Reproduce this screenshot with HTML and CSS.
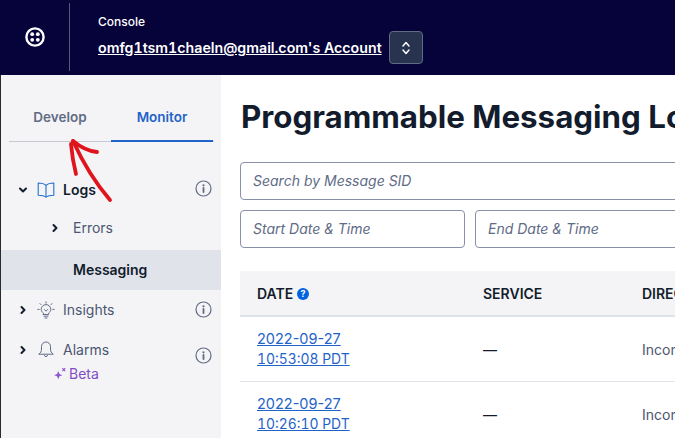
FILE: index.html
```html
<!DOCTYPE html>
<html lang="en">
<head>
<meta charset="utf-8">
<title>Programmable Messaging Logs</title>
<link rel="stylesheet" href="styles.css">
</head>
<body>
<header class="topbar">
	<div class="logo-cell">
		<svg width="22" height="22" viewBox="0 0 22 22" fill="none"><circle cx="11" cy="11" r="8.6" stroke="#fff" stroke-width="2.4"/><circle cx="8.2" cy="8.2" r="1.9" fill="#fff"/><circle cx="13.8" cy="8.2" r="1.9" fill="#fff"/><circle cx="8.2" cy="13.8" r="1.9" fill="#fff"/><circle cx="13.8" cy="13.8" r="1.9" fill="#fff"/></svg>
	</div>
	<div class="account">
		<div class="console">Console</div>
		<div class="account-row">
			<a href="#" class="account-name">omfg1tsm1chaeln@gmail.com's Account</a>
			<button class="switcher">
				<svg width="10" height="16" viewBox="0 0 10 16" fill="none" stroke="#fff" stroke-width="1.5" stroke-linecap="round" stroke-linejoin="round"><path d="M2 6 5 2.6 8 6"/><path d="M2 10 5 13.4 8 10"/></svg>
			</button>
		</div>
	</div>
</header>
<div class="layout">
	<nav class="sidebar">
		<div class="tabs">
			<a href="#" class="tab">Develop</a>
			<a href="#" class="tab active">Monitor</a>
		</div>
		<ul class="menu">
			<li class="item item-logs">
				<svg class="chev" width="10" height="10" viewBox="0 0 10 10" fill="none" stroke="#121c2d" stroke-width="2" stroke-linecap="round" stroke-linejoin="round"><path d="M2 3.5 5 6.5 8 3.5"/></svg>
				<svg class="icon" width="18" height="18" viewBox="0 0 18 18" fill="none" stroke="#1f6fd0" stroke-width="1.1" stroke-linejoin="round"><path d="M9 4.4C7.4 2.8 4.8 2 1.2 2v12.2c3.6 0 6.2.6 7.8 2 1.6-1.400 4.200-2 7.800-2V2C13.200 2 10.600 2.800 9 4.400Z"/><path d="M9 4.400V16.200"/></svg>
				<span class="label strong">Logs</span>
				<svg class="info" width="17" height="17" viewBox="0 0 17 17"><use href="#info"/></svg>
			</li>
			<li class="item sub">
				<svg class="chev" width="10" height="10" viewBox="0 0 10 10" fill="none" stroke="#121c2d" stroke-width="2" stroke-linecap="round" stroke-linejoin="round"><path d="M3.5 2 6.5 5 3.5 8"/></svg>
				<span class="label">Errors</span>
			</li>
			<li class="item selected"><span class="label strong">Messaging</span></li>
			<li class="item item-insights">
				<svg class="chev" width="10" height="10" viewBox="0 0 10 10" fill="none" stroke="#121c2d" stroke-width="2" stroke-linecap="round" stroke-linejoin="round"><path d="M3.5 2 6.5 5 3.5 8"/></svg>
				<svg class="icon" width="18" height="18" viewBox="0 0 18 18" fill="none" stroke="#606b85" stroke-width="1" stroke-linecap="round" stroke-linejoin="round"><path d="M6.3 12C4.9 11 4.2 9.8 4.2 8.4a4.800 4.800 0 0 1 9.600 0c0 1.400-.7 2.600-2.100 3.600V13.500H6.300Z"/><path d="M7 15.200h4M8 17h2M9 .8v1.400M3 2.600l1 1M15 2.600l-1 1M.8 8.400h1.400M15.800 8.400h1.400M7.200 8.400 9 10.200l1.800-1.800"/></svg>
				<span class="label">Insights</span>
				<svg class="info" width="17" height="17" viewBox="0 0 17 17"><use href="#info"/></svg>
			</li>
			<li class="item item-alarms">
				<svg class="chev" width="10" height="10" viewBox="0 0 10 10" fill="none" stroke="#121c2d" stroke-width="2" stroke-linecap="round" stroke-linejoin="round"><path d="M3.5 2 6.5 5 3.5 8"/></svg>
				<svg class="icon" width="18" height="18" viewBox="0 0 18 18" fill="none" stroke="#606b85" stroke-width="1" stroke-linecap="round" stroke-linejoin="round"><path d="M2 14c1.5-1 2.5-2.5 2.5-5V6.500a4.500 4.500 0 0 1 9 0V9c0 2.500 1 4 2.500 5Z"/><path d="M7.400 15.500a1.700 1.700 0 0 0 3.200 0"/></svg>
				<span class="alarm-text">
					<span class="label">Alarms</span>
					<span class="beta">
						<svg class="beta-star" width="14" height="14" viewBox="0 0 12 12" fill="#8d56d0"><path d="M4.5 3.5 5.5 6 8 7 5.5 8 4.5 10.5 3.5 8 1 7 3.5 6Z"/><path d="M8 1l2.5 2.5M10.5 1 8 3.5" stroke="#8d56d0" stroke-width="1" fill="none"/></svg>Beta
					</span>
				</span>
				<svg class="info" width="17" height="17" viewBox="0 0 17 17"><use href="#info"/></svg>
			</li>
		</ul>
		<svg class="arrow" width="60" height="66" viewBox="0 0 60 66" fill="none" stroke="#e0141c" stroke-width="3.8" stroke-linecap="round" stroke-linejoin="round"><path d="M4 6C5 18 7 28 9 36"/><path d="M6 3C12 16 24 40 43 62"/><path d="M6 3C12 8 20 13 30 14"/></svg>
	</nav>
	<main class="main">
		<h1 class="title">Programmable Messaging Logs</h1>
		<div class="field field-full">Search by Message SID</div>
		<div class="date-row">
			<div class="field field-start">Start Date &amp; Time</div>
			<div class="field field-end">End Date &amp; Time</div>
		</div>
		<table class="logs">
			<thead>
				<tr>
					<th class="col-date">DATE <svg class="help" width="12" height="12" viewBox="0 0 12 12"><circle cx="6" cy="6" r="6" fill="#0263e0"/><text x="6" y="9.3" text-anchor="middle" font-family="Inter" font-size="9" font-weight="700" fill="#fff">?</text></svg></th>
					<th class="col-service">SERVICE</th>
					<th>DIRECTION</th>
				</tr>
			</thead>
			<tbody>
				<tr>
					<td><a href="#">2022-09-27<br><span class="time">10:53:08 PDT</span></a></td>
					<td>—</td>
					<td class="muted">Incoming</td>
				</tr>
				<tr>
					<td><a href="#">2022-09-27<br><span class="time">10:26:10 PDT</span></a></td>
					<td>—</td>
					<td class="muted">Incoming</td>
				</tr>
			</tbody>
		</table>
	</main>
</div>
<svg class="defs" width="0" height="0">
	<symbol id="info" viewBox="0 0 17 17">
		<circle cx="8.5" cy="8.5" r="7.5" fill="none" stroke="#606b85" stroke-width="1.2"/>
		<circle cx="8.5" cy="5.3" r="1.1" fill="#606b85"/>
		<path d="M8.5 7.8v4.2" stroke="#606b85" stroke-width="1.8" stroke-linecap="round"/>
	</symbol>
</svg>
</body>
</html>
```

FILE: styles.css
```css
html, body {
	margin:0;
	padding:0;
	height:100%;
	overflow:hidden;
	background:#ffffff;
	font-family:Inter, "Liberation Sans", sans-serif;
	color:#121c2d;}
a {color:inherit;}
.defs {display:block;}

.topbar {
	display:flex;
	height:75px;
	background:#06033a;
	color:#ffffff;}
.logo-cell {
	display:flex;
	align-items:center;
	justify-content:center;
	width:69px;
	height:68px;
	margin-top:3px;
	border-right:1px solid #565b78;}
.account {padding:14px 0 0 28px;}
.console {
	font-size:12px;
	line-height:15px;
	font-weight:500;}
.account-row {
	display:flex;
	align-items:center;
	gap:7px;
	margin-top:2px;}
.account-name {
	font-size:14.2px;
	font-weight:600;
	font-variant-numeric:tabular-nums;
	color:#ffffff;}
.switcher {
	display:flex;
	align-items:center;
	justify-content:center;
	width:34px;
	height:33px;
	padding:0;
	background:#27334f;
	border:1px solid #606b85;
	border-radius:4px;}

.layout {
	display:flex;
	height:363px;}
.sidebar {
	position:relative;
	width:221px;
	flex:none;
	box-sizing:border-box;
	padding-top:25px;
	background:#f4f4f6;
	border-left:1px solid #2b2b2b;}
.tabs {
	display:flex;
	margin:0 7px 0 8px;
	padding-right:1px;
	border-bottom:1px solid #c8cad2;
	height:41px;}
.tab {
	flex:1;
	text-align:center;
	font-size:13.5px;
	line-height:34px;
	font-weight:600;
	text-decoration:none;
	color:#606b85;}
.tab.active {
	color:#1f63c8;
	border-bottom:2px solid #1f63c8;
	height:40px;}
.menu {
	list-style:none;
	margin:0;
	padding:0;}
.item {
	display:flex;
	align-items:center;
	padding-left:17px;
	font-size:14px;
	color:#4b5671;}
.item .chev {flex:none; margin-right:9px;}
.item .icon {flex:none; margin-right:8px;}
.item .info {margin-left:auto; margin-right:9px; flex:none;}
.item-logs {height:36px; margin-top:30px;}
.item-logs .info {margin-top:-3px;}
.sub {height:40px; padding:0 0 2px 49px;}
.sub .chev {margin-right:13px;}
.selected {
	height:40px;
	padding-left:72px;
	background:#e1e3ea;}
.item-insights {height:40px;}
.item-insights .info {margin-top:-2px;}
.item-alarms {align-items:flex-start; padding-top:10px;}
.item-alarms .chev {margin-top:5px;}
.item-alarms .info {margin-top:7px;}
.label {font-size:14px; line-height:20px;}
.strong {font-weight:600; color:#121c2d;}
.alarm-text {display:flex; flex-direction:column;}
.beta {
	display:flex;
	align-items:center;
	margin-left:-10px;
	margin-top:6px;
	font-size:14px;
	line-height:16px;
	color:#7f4ec6;}
.beta-star {margin-right:2px;}
.arrow {
	position:absolute;
	left:66px;
	top:63px;}

.main {
	flex:1;
	min-width:0;
	padding:22px 0 0 19px;
	overflow:hidden;}
.title {
	margin:0 0 0 1px;
	font-size:31.3px;
	line-height:40px;
	font-weight:700;
	white-space:nowrap;
	color:#121c2d;}
.field {
	box-sizing:border-box;
	height:38px;
	padding-left:12px;
	line-height:36px;
	font-size:14px;
	font-style:italic;
	color:#606b85;
	background:#ffffff;
	border:1px solid #8891aa;
	border-radius:4px;}
.field-full {margin-top:25px; width:calc(100% + 20px);}
.date-row {
	display:flex;
	gap:10px;
	margin-top:10px;}
.field-start {width:225px; flex:none;}
.field-end {flex:none; width:225px;}
.logs {
	width:500px;
	margin-top:23px;
	border-collapse:collapse;
	table-layout:fixed;
	font-size:14px;}
.logs th {
	height:44px;
	padding:0 0 0 17px;
	text-align:left;
	font-size:14px;
	font-weight:600;
	white-space:nowrap;
	background:#f4f4f6;
	border-bottom:2px solid #e1e3ea;}
.logs th.col-date {width:209px;}
.logs th.col-service {width:142px;}
.logs td {
	height:64px;
	padding:0 0 0 17px;
	white-space:nowrap;
	border-bottom:1px solid #e1e3ea;}
.logs td a {
	display:inline-block;
	font-size:14.5px;
	line-height:20px;
	color:#1f63c8;}
.logs td a .time {
	font-size:13.9px;
	font-variant-numeric:tabular-nums;}
.logs td.muted {color:#4b5671;}
.help {vertical-align:-1px;}
```
